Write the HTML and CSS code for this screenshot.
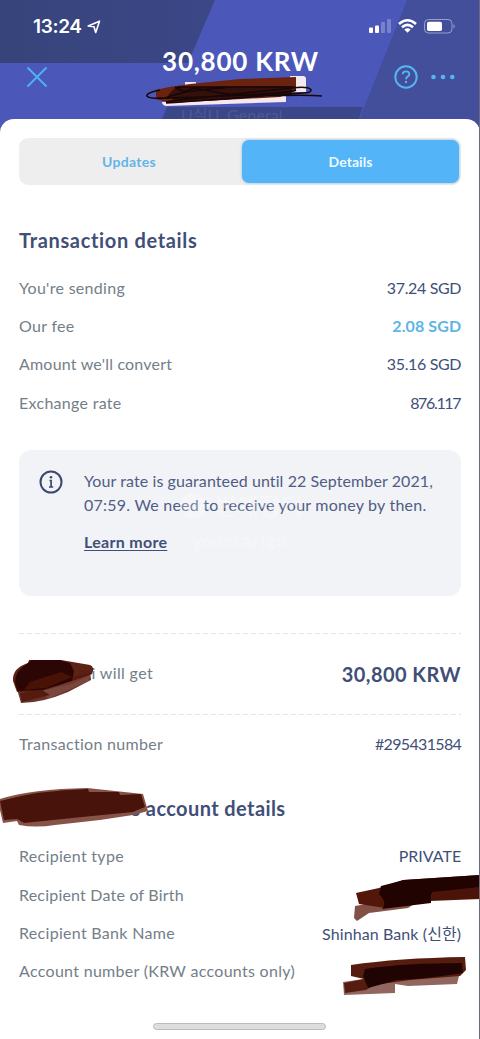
FILE: index.html
```html
<!DOCTYPE html>
<html lang="en">
<head>
<meta charset="utf-8">
<title>Transaction details</title>
<link rel="stylesheet" href="styles.css">
</head>
<body>
<div class="phone">
  <header class="header">
    <svg class="header-art" width="480" height="140" viewBox="0 0 480 140">
      <defs><linearGradient id="navy" x1="0" x2="1"><stop offset="0" stop-color="#37447b"/><stop offset="1" stop-color="#3b4787"/></linearGradient></defs>
      <rect width="480" height="140" fill="#4b58b9"/>
      <path d="M0 0H215L188 63H0Z" fill="url(#navy)"/>
      <path d="M407 0H480V140H351Z" fill="#434f9b"/>
      <path d="M167 107H363L351 140H153Z" fill="#3c478a"/>
    </svg>
    <div class="status">
      <div class="clock">13:24
        <svg width="14" height="14" viewBox="0 0 14 14"><path d="M1.200 6 12.500 1.200 8.700 12.500 7 6.800Z" fill="none" stroke="#fff" stroke-width="1.600" stroke-linejoin="round"/></svg>
      </div>
      <svg width="90" height="18" viewBox="0 0 90 18">
        <g fill="#fff"><rect x="4" y="10.500" width="4" height="5.500" rx="1"/><rect x="10" y="8.500" width="4" height="7.500" rx="1"/><rect x="16" y="5" width="4" height="11" rx="1" opacity=".25"/><rect x="22" y="2" width="4" height="14" rx="1" opacity=".25"/></g>
        <path d="M34 7Q42.500-.5 51 7M37 10.200Q42.500 5.500 48 10.200" fill="none" stroke="#fff" stroke-width="2.600"/>
        <path d="M39.300 12.400Q42.500 10 45.700 12.400L42.500 15.800Z" fill="#fff"/>
        <rect x="59.500" y="2.500" width="27.500" height="13.500" rx="4" fill="none" stroke="#fff" stroke-opacity=".45"/>
        <rect x="62" y="4.700" width="15" height="9.300" rx="1.800" fill="#fff"/>
        <path d="M88.500 7Q91 9 88.500 11.500Z" fill="#fff" opacity=".45"/>
      </svg>
    </div>
    <div class="nav">
      <svg class="close" width="22" height="22" viewBox="0 0 22 22"><path d="M1.500 1.500 20.500 20.500M20.500 1.500 1.500 20.500" stroke="#4fb0f3" stroke-width="2"/></svg>
      <h1 class="amount">30,800 KRW</h1>
      <div class="actions">
        <svg width="24" height="24" viewBox="0 0 24 24" fill="none" stroke="#55b5f4"><circle cx="12" cy="12" r="10.700" stroke-width="2"/><path d="M8.700 9.300C8.900 5.300 15.300 5.500 15.300 9.200 15.300 11.700 12 11.500 12 14.200" stroke-width="1.900"/><circle cx="12" cy="17" r="1.200" fill="#55b5f4" stroke="none"/></svg>
        <svg width="24" height="24" viewBox="0 0 24 24" fill="#55b5f4"><circle cx="2.500" cy="12" r="2.300"/><circle cx="12" cy="12" r="2.300"/><circle cx="21.300" cy="12" r="2.300"/></svg>
      </div>
    </div>
    <div class="ghost">U실U, General</div>
    <svg class="scribble title-scribble" width="182" height="32" viewBox="142 75 182 32">
      <path d="M185 82H196V88H185ZM290 76H303Q306 76 306 79V92H290ZM162 102 286 95V102L166 106Q162 105 162 102Z" fill="#f5e8ef"/>
      <path d="M156 90Q172 86 190 84L240 79 296 77V91L280 97 205 101 170 103 156 99Z" fill="#69230f"/>
      <path d="M176 87 292 86V94L220 100 175 101 168 95Z" fill="#35100a"/>
      <path d="M160 90C140 94 142 100 170 98C220 97 291 93 296 90M158 98H165C180 92 200 89 225 88M166 102C200 97 266 91 292 88C314 85 316 93 303 93C280 94 230 99 166 103M177 87 295 87M175 87C193 98 182 84 205 90C250 100 291 93 322 96" fill="none" stroke="#180609" stroke-width="1.500"/>
    </svg>
  </header>

  <main class="sheet">
    <nav class="tabs"><a class="tab">Updates</a><a class="tab tab-active">Details</a></nav>

    <h2 class="heading">Transaction details</h2>
    <dl class="rows">
      <div class="row"><dt>You're sending</dt><dd>37.24 SGD</dd></div>
      <div class="row"><dt>Our fee</dt><dd class="fee">2.08 SGD</dd></div>
      <div class="row"><dt class="convert">Amount we'll convert</dt><dd>35.16 SGD</dd></div>
      <div class="row"><dt>Exchange rate</dt><dd class="rate">876.117</dd></div>
    </dl>

    <section class="notice">
      <svg width="24" height="24" viewBox="0 0 24 24"><circle cx="12" cy="12" r="10.500" fill="none" stroke="#3b4970" stroke-width="2"/><path d="M10.500 10.500H12.100V17M10 17H14.200" fill="none" stroke="#3b4970" stroke-width="1.700"/><circle cx="12" cy="7.200" r="1.300" fill="#3b4970"/></svg>
      <div class="notice-copy">
        <p class="line-one">Your rate is guaranteed until 22 September 2021,</p>
        <p class="line-two">07:59. We need to receive your money by then.</p>
        <a class="learn">Learn more</a>
      </div>
      <div class="watermark"><svg width="28" height="28" viewBox="0 0 28 28"><circle cx="14" cy="14" r="13" fill="#fff"/></svg><span>번개장터</span><small>yooncartgo</small></div>
    </section>

    <div class="total">
      <span class="get">mi will get</span><strong>30,800 KRW</strong>
      <svg class="scribble get-scribble" width="86" height="48" viewBox="10 656 86 48">
        <path d="M17 688 90 672 91 679 68 691Q42 702 21 702Z" fill="#66342a"/>
        <path d="M13 680Q12 667 28 662L29 659 61 659 90 664Q95 666 92 673L72 683 40 690 17 691Z" fill="#55190c" fill-opacity=".96"/>
        <path d="M28 662 32 659H59L70 662 74 670 72 680 42 689 18 690Q9 674 28 662Z" fill="#2c0604"/>
        <path d="M30 681 61 671 72 676 46 687 24 689Z" fill="#491207"/>
        <path d="M42 690 90 674 89 680 48 698Z" fill="#925f59" opacity=".45"/>
        <path d="M20 692 42 689 50 694 22 701Z" fill="#561b0e"/>
      </svg>
    </div>
    <div class="transaction row"><span>Transaction number</span><b class="reference-id">#295431584</b></div>

    <h2 class="heading account">'s account details
      <svg class="scribble account-scribble" width="150" height="40" viewBox="0 787 150 40">
        <path d="M0 799Q32 789 87 788L143 794 148 811 133 815 100 820 55 825Q36 828 19 825L17 821 3 823 0 810Z" fill="#875349"/>
        <path d="M0 801Q40 790 88 789L89 792H119L120 795 141 794 145 807 133 812 82 817 24 823 17 819 4 820Z" fill="#48130a"/>
      </svg>
    </h2>
    <dl class="rows recipient">
      <div class="row"><dt>Recipient type</dt><dd class="private">PRIVATE</dd></div>
      <div class="row"><dt class="birth">Recipient Date of Birth</dt><dd></dd></div>
      <div class="row"><dt>Recipient Bank Name</dt><dd class="bank">Shinhan Bank (신한)</dd></div>
      <div class="row"><dt>Account number (KRW accounts only)</dt><dd></dd></div>
      <svg class="scribble birth-scribble" width="128" height="50" viewBox="352 872 128 50">
        <path d="M355 906 395 899 426 896 408 908 369 913 357 921 354 918Z" fill="#825047"/>
        <path d="M356 893 379 888 403 880 480 875V899L430 901 385 908 359 904Z" fill="#531709"/>
        <path d="M381 886 404 880 480 875V887L431 894V903L382 909Q388 903 379 894Z" fill="#210302"/>
        <path d="M432 892 480 887V898L459 899 432 900Z" fill="#4c1309"/>
      </svg>
      <svg class="scribble number-scribble" width="128" height="42" viewBox="340 955 128 42">
        <path d="M343 982 370 978 424 974 459 976 457 984 408 986 395 984V993L344 995Z" fill="#90665e"/>
        <path d="M351 965Q398 958 465 957L466 970 460 976 410 980 374 985 366 990 345 993 344 983 364 979 351 976Z" fill="#571c10"/>
        <path d="M365 969Q405 963 462 963L463 973Q425 979 397 980L368 988 363 976Z" fill="#200403"/>
      </svg>
    </dl>
  </main>
  <div class="home-bar"></div>
</div>
</body>
</html>
```
FILE: styles.css
```css
* { box-sizing: border-box; }
body { margin: 0; font-family: Lato, "Noto Sans CJK KR", sans-serif; color: #414f78; }
h1, h2, dl, dd, p { margin: 0; }
svg { display: block; flex: none; }
.phone { position: relative; width: 480px; height: 1039px; overflow: hidden; background: #fff; }
.phone::after { content: ""; position: absolute; top: 0; right: 0; width: 1px; height: 100%; background: #696b78; }
.header { position: relative; height: 119px; }
.header-art { position: absolute; inset: 0; }
.status { position: relative; height: 45px; padding: 17px 25px 0 33px; display: flex; justify-content: space-between; align-items: flex-start; }
.clock { display: flex; align-items: center; gap: 5px; font: 600 19px/20px Inter, sans-serif; letter-spacing: -.35px; color: #fff; }
.nav { position: relative; height: 50px; padding: 0 25px 0 26px; display: grid; grid-template-columns: 75px 1fr 75px; }
.close { margin-top: 21px; }
.amount { padding-top: 1px; text-align: center; color: #fff; font-size: 26px; line-height: 31px; font-weight: 700; letter-spacing: .75px; white-space: nowrap; }
.actions { display: flex; justify-content: flex-end; gap: 13px; padding-top: 20px; }
.ghost { position: absolute; left: 181px; top: 107px; font-size: 16px; line-height: 16px; letter-spacing: .1px; color: #4d598f; }
.scribble { position: absolute; }
.title-scribble { left: 142px; top: 75px; }
.sheet { position: relative; height: 920px; padding: 19px 19px 0; border-radius: 14px 14px 0 0; background: #fff; }
.tabs { display: grid; grid-template-columns: 223px 1fr; height: 47px; padding: 2px 2px 2px 0; border-radius: 9px; background: #eee; }
.tab { display: grid; place-items: center; font-size: 14px; font-weight: 700; letter-spacing: .3px; color: #64b4e7; }
.tab:first-child { padding-right: 3px; }
.tab-active { letter-spacing: .05px; border-radius: 7px; color: #edfaff; background: #54b4f8; box-shadow: 0 0 3px #91bad5; }
.heading { margin-top: 43px; height: 24px; font-size: 20px; line-height: 24px; font-weight: 700; letter-spacing: .66px; }
.rows { margin-top: 16px; font-size: 16px; }
.row { height: 38.4px; display: flex; justify-content: space-between; align-items: center; font-size: 16px; white-space: nowrap; letter-spacing: .3px; color: #747e88; }
.row .convert, .row .birth { letter-spacing: .2px; }
.row dd, .row b { margin-right: -.2px; font-weight: 400; letter-spacing: -.35px; color: #414f78; }
.row .fee { font-weight: 700; letter-spacing: .1px; color: #5cb5e5; }
.row .rate { letter-spacing: -1.35px; padding-right: 1px; }
.row b.reference-id { letter-spacing: -.65px; }
.row .private { letter-spacing: 0; }
.row .bank { letter-spacing: .1px; }
.notice { position: relative; height: 146px; margin-top: 28px; padding: 19px 20px 0; display: flex; gap: 21px; border-radius: 12px; background: #f2f3f6; }
.notice > svg { margin-top: 1px; }
.notice-copy { font-size: 16px; line-height: 24.4px; white-space: nowrap; color: #505d85; }
.line-one { letter-spacing: .09px; }
.line-two { letter-spacing: .23px; }
.learn { display: inline-block; margin-top: 13px; font-weight: 700; text-decoration: underline; text-underline-offset: 2px; letter-spacing: .3px; color: #414f78; }
.watermark { position: absolute; left: 160px; top: 42px; display: grid; grid-template-columns: 28px 90px; gap: 0 8px; color: #fff; opacity: .25; font-size: 24px; line-height: 28px; font-weight: 700; }
.watermark small { grid-column: 1 / 3; padding: 11px 0 0 14px; font-size: 17px; letter-spacing: .8px; line-height: 20px; }
.total { position: relative; height: 82px; margin-top: 37px; display: flex; justify-content: space-between; align-items: center; }
.total::before, .total::after { content: ""; position: absolute; left: 0; right: 0; height: 1px; background: repeating-linear-gradient(90deg, #e0e3e7 0 5px, transparent 5px 8px); }
.total::before { top: 0; }
.total::after { bottom: 0; }
.get { padding: 0 0 2px 59px; font-size: 16px; color: #747e88; letter-spacing: .35px; }
.total strong { font-size: 20px; letter-spacing: .45px; }
.get-scribble { left: -9px; top: 24px; }
.transaction { height: 60px; padding-bottom: 2px; }
.account { position: relative; margin-top: 21px; padding-left: 108px; letter-spacing: .4px; }
.account-scribble { left: -19px; top: -9px; }
.recipient { position: relative; margin-top: 17px; }
.birth-scribble { left: 333px; top: 35px; }
.number-scribble { left: 321px; top: 118px; }
.home-bar { position: absolute; left: 153px; top: 1023px; width: 173px; height: 7px; border: 1px solid #bbb; border-radius: 4px; background: #ddd; }
```
